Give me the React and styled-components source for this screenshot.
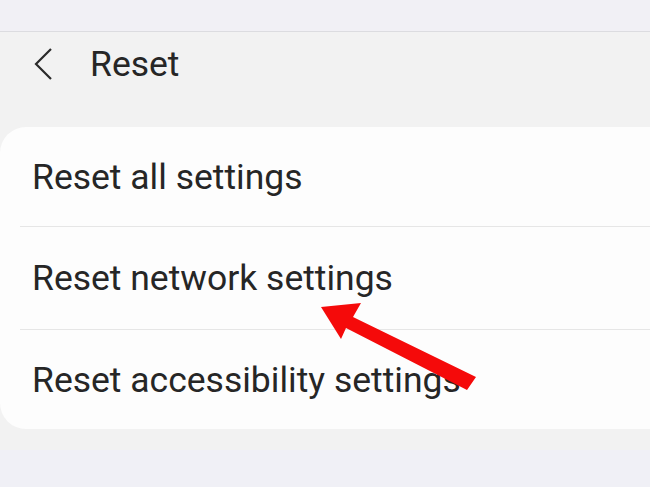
import React from 'react';
import styled, { createGlobalStyle } from 'styled-components';

const GlobalStyle = createGlobalStyle`
    html, body {
        margin: 0;
        padding: 0;
        background: #f0f0f5;
        overflow: hidden;
    }
    * {
        box-sizing: border-box;
    }
`;

const Screen = styled.div`
    position: relative;
    width: 650px;
    height: 487px;
    display: flex;
    flex-direction: column;
    background: #f2f2f2;
    font-family: Roboto, "Noto Sans", "Liberation Sans", sans-serif;
    color: #262626;
    overflow: hidden;
`;

const StatusStrip = styled.div`
    height: 32px;
    flex-shrink: 0;
    background: #f1f0f5;
    border-bottom: 1px solid #dcdce0;
`;

const Header = styled.div`
    height: 64px;
    display: flex;
    align-items: center;
    gap: 36px;
    padding-left: 34px;
    margin-bottom: 31px;
`;

const BackButton = styled.button`
    display: flex;
    align-items: center;
    background: none;
    border: 0;
    padding: 0;
    width: 20px;
    height: 32px;
    color: #2b2b2b;
    cursor: pointer;
`;

const Title = styled.h1`
    margin: 0;
    font-size: 35.5px;
    font-weight: 400;
    line-height: 44px;
    color: #262626;
`;

const Card = styled.ul`
    list-style: none;
    margin: 0;
    padding: 0;
    background: #fdfdfd;
    border-radius: 26px 0 0 26px;
    display: flex;
    flex-direction: column;
`;

const Row = styled.li`
    position: relative;
    height: ${({ $h }) => $h}px;
    display: flex;
    align-items: center;
    padding-left: 32px;
    font-size: 35.5px;
    line-height: 44px;
    cursor: pointer;
`;

const Divider = styled.li`
    height: 1px;
    margin-left: 20px;
    background: #e6e6e6;
`;

const Gap = styled.div`
    height: 21px;
    flex-shrink: 0;
`;

const BottomStrip = styled.div`
    flex: 1;
    background: #f0f0f6;
`;

const Annotation = styled.svg`
    position: absolute;
    left: 0;
    top: 0;
    pointer-events: none;
`;

const rows = [
    { label: 'Reset all settings', h: 99 },
    { label: 'Reset network settings', h: 102 },
    { label: 'Reset accessibility settings', h: 99 },
];

const App = () => {
    return (
        <>
            <GlobalStyle />
            <Screen>
                <StatusStrip />
                <Header>
                    <BackButton aria-label="Back">
                        <svg width="20" height="32" viewBox="0 0 20 32">
                            <path d="M17 1 L2 16 L17 31" fill="none" stroke="currentColor" strokeWidth="2.2" />
                        </svg>
                    </BackButton>
                    <Title>Reset</Title>
                </Header>
                <Card>
                    {rows.map((row, index) => (
                        <React.Fragment key={row.label}>
                            {index > 0 && <Divider />}
                            <Row $h={row.h}>{row.label}</Row>
                        </React.Fragment>
                    ))}
                </Card>
                <Gap />
                <BottomStrip />
                <Annotation width="650" height="487" viewBox="0 0 650 487">
                    <polygon
                        points="321,307 361,303 353,317 476,377 467,390 346,328 341,339"
                        fill="#f50a0a"
                    />
                </Annotation>
            </Screen>
        </>
    );
};

export default App;
